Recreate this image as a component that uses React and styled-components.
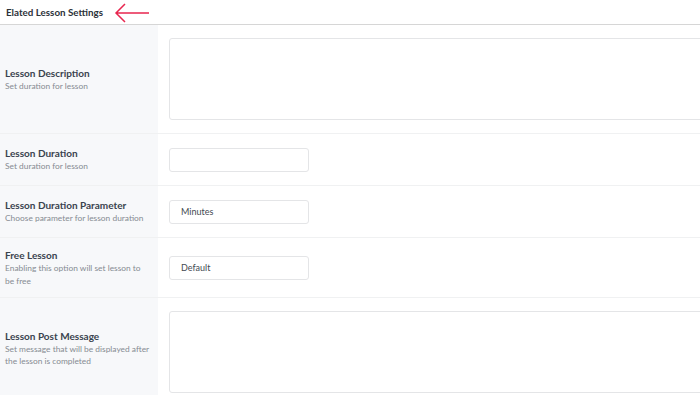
import React from "react";
import styled, { createGlobalStyle } from "styled-components";

const Global = createGlobalStyle`
  html, body {
    margin: 0;
    padding: 0;
    background: #ffffff;
    overflow: hidden;
  }
  body {
    font-family: Lato, "Open Sans", sans-serif;
  }
`;

const rows = [
  { title: "Lesson Description", desc: "Set duration for lesson", kind: "area", height: 108 },
  { title: "Lesson Duration", desc: "Set duration for lesson", kind: "input", value: "", height: 51 },
  { title: "Lesson Duration Parameter", desc: "Choose parameter for lesson duration", kind: "input", value: "Minutes", height: 51 },
  { title: "Free Lesson", desc: "Enabling this option will set lesson to\nbe free", kind: "input", value: "Default", height: 59 },
  { title: "Lesson Post Message", desc: "Set message that will be displayed after\nthe lesson is completed", kind: "area", height: 100 },
];

const App = () => {
  return (
    <>
      <Global />
      <Wrap>
        <Header>
          <Title>Elated Lesson Settings</Title>
          <Arrow width="36" height="22" viewBox="0 0 36 22">
            <path d="M35 11 H2 M11 2 L2 11 L11 20" fill="none" stroke="#e8264f" strokeWidth="1.5" />
          </Arrow>
        </Header>
        {rows.map((row) => (
          <Row key={row.title} $height={row.height}>
            <LabelCell>
              <Label>{row.title}</Label>
              <Desc>{row.desc}</Desc>
            </LabelCell>
            <FieldCell $area={row.kind === "area"}>
              {row.kind === "area" ? <TextArea /> : <Input>{row.value}</Input>}
            </FieldCell>
          </Row>
        ))}
      </Wrap>
    </>
  );
};

const Wrap = styled.div`
  width: 700px;
  height: 395px;
  overflow: hidden;
  background: #ffffff;
`;

const Header = styled.div`
  height: 25px;
  display: flex;
  align-items: center;
  padding-left: 6px;
  border-bottom: 1px solid #d6d6d6;
  box-sizing: border-box;
`;

const Title = styled.div`
  font-size: 9.8px;
  font-weight: 700;
  color: #2c323a;
`;

const Arrow = styled.svg`
  margin-left: 11px;
  margin-top: 1px;
`;

const Row = styled.div`
  display: grid;
  grid-template-columns: 158px 1fr;
  height: ${(p) => p.$height}px;
  border-bottom: 1px solid #f0f1f2;
`;

const LabelCell = styled.div`
  background: #f7f8fa;
  display: flex;
  flex-direction: column;
  justify-content: center;
  padding: 0 4px 0 5px;
`;

const Label = styled.div`
  font-size: 10px;
  font-weight: 700;
  color: #3a434e;
  line-height: 14px;
`;

const Desc = styled.div`
  font-size: 8.4px;
  color: #868b92;
  line-height: 12.5px;
  white-space: pre-line;
`;

const FieldCell = styled.div`
  display: flex;
  align-items: ${(p) => (p.$area ? "flex-start" : "center")};
  padding: ${(p) => (p.$area ? "13px 0 0 11px" : "0 0 0 11px")};
`;

const TextArea = styled.div`
  width: 560px;
  flex-shrink: 0;
  height: 80px;
  border: 1px solid #e4e5e7;
  border-radius: 3px;
  background: #ffffff;
`;

const Input = styled.div`
  width: 140px;
  height: 24px;
  border: 1px solid #e4e5e7;
  border-radius: 3px;
  background: #ffffff;
  display: flex;
  align-items: center;
  padding-left: 11px;
  box-sizing: border-box;
  font-size: 9px;
  color: #444a52;
`;

export default App;
